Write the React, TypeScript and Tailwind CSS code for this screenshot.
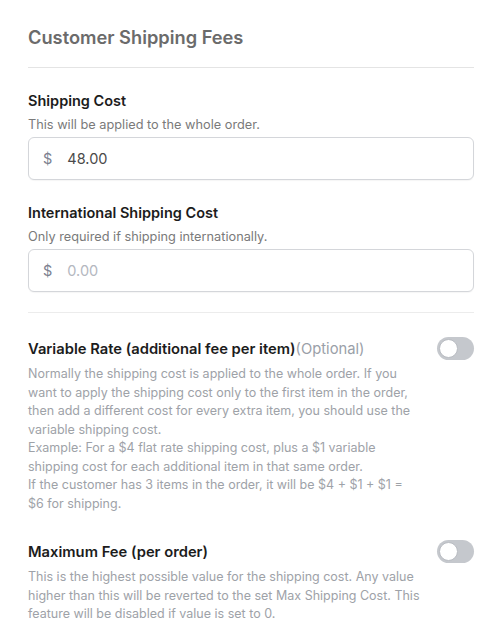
import React from 'react';

// Shipping fee settings panel: two currency inputs and two optional toggles.

function MoneyInput({ value, placeholder }: { value?: string; placeholder?: string }) {
  return (
    <div className="mt-[3px] flex h-[43px] items-center rounded-[6px] border border-[#d4d6da] bg-white px-[14px] shadow-[0_1px_1px_rgba(0,0,0,0.04)]">
      <span className="text-[14.5px] text-[#7b8190]">$</span>
      <input
        className="ml-[15px] w-full bg-transparent text-[14.5px] text-[#4a4a4a] placeholder:text-[#b4b8bf] outline-none"
        defaultValue={value}
        placeholder={placeholder}
      />
    </div>
  );
}

function Toggle() {
  return (
    <div className="relative h-[23px] w-[37px] shrink-0 rounded-full bg-[#c5c8cd]">
      <div className="absolute left-[2px] top-[2px] h-[19px] w-[19px] rounded-full border-[1.5px] border-[#b9bcc2] bg-white" />
    </div>
  );
}

export default function App() {
  return (
    <div className="min-h-screen bg-white px-[28px] pt-[25px] font-['Inter','Noto_Sans',sans-serif] antialiased">
      <h1 className="text-[18.25px] font-semibold leading-[24px] text-[#6b6b6b]">Customer Shipping Fees</h1>
      <div className="mt-[18px] h-px bg-[#e4e4e4]" />

      <div className="mt-[23px]">
        <h2 className="text-[14.5px] font-semibold leading-[20px] text-[#1c1c1c]">Shipping Cost</h2>
        <p className="mt-[5px] text-[12.75px] leading-[18px] text-[#7a7a7a]">This will be applied to the whole order.</p>
        <MoneyInput value="48.00" />
      </div>

      <div className="mt-[23px]">
        <h2 className="text-[14.5px] font-semibold leading-[20px] text-[#1c1c1c]">International Shipping Cost</h2>
        <p className="mt-[5px] text-[12.75px] leading-[18px] text-[#7a7a7a]">Only required if shipping internationally.</p>
        <MoneyInput placeholder="0.00" />
      </div>

      <div className="mt-[20px] h-px bg-[#ececec]" />

      <div className="mt-[24px]">
        <div className="flex items-center justify-between">
          <h2 className="text-[14.75px] font-semibold leading-[20px] text-[#1c1c1c]">
            Variable Rate (additional fee per item)
            <span className="font-normal text-[#9aa0a8]">(Optional)</span>
          </h2>
          <Toggle />
        </div>
        <p className="mt-[5px] max-w-[394px] text-[12.5px] leading-[18.5px] text-[#9ea2a8]">
          Normally the shipping cost is applied to the whole order. If you want to apply the shipping cost only to the
          first item in the order, then add a different cost for every extra item, you should use the variable shipping
          cost.
          <br />
          Example: For a $4 flat rate shipping cost, plus a $1 variable shipping cost for each additional item in that
          same order.
          <br />
          If the customer has 3 items in the order, it will be $4 + $1 + $1 = $6 for shipping.
        </p>
      </div>

      <div className="mt-[27px]">
        <div className="flex items-center justify-between">
          <h2 className="text-[14.75px] font-semibold leading-[20px] text-[#1c1c1c]">Maximum Fee (per order)</h2>
          <Toggle />
        </div>
        <p className="mt-[5px] max-w-[394px] text-[12.5px] leading-[18.5px] text-[#9ea2a8]">
          This is the highest possible value for the shipping cost. Any value higher than this will be reverted to the
          set Max Shipping Cost. This feature will be disabled if value is set to 0.
        </p>
      </div>
    </div>
  );
}
